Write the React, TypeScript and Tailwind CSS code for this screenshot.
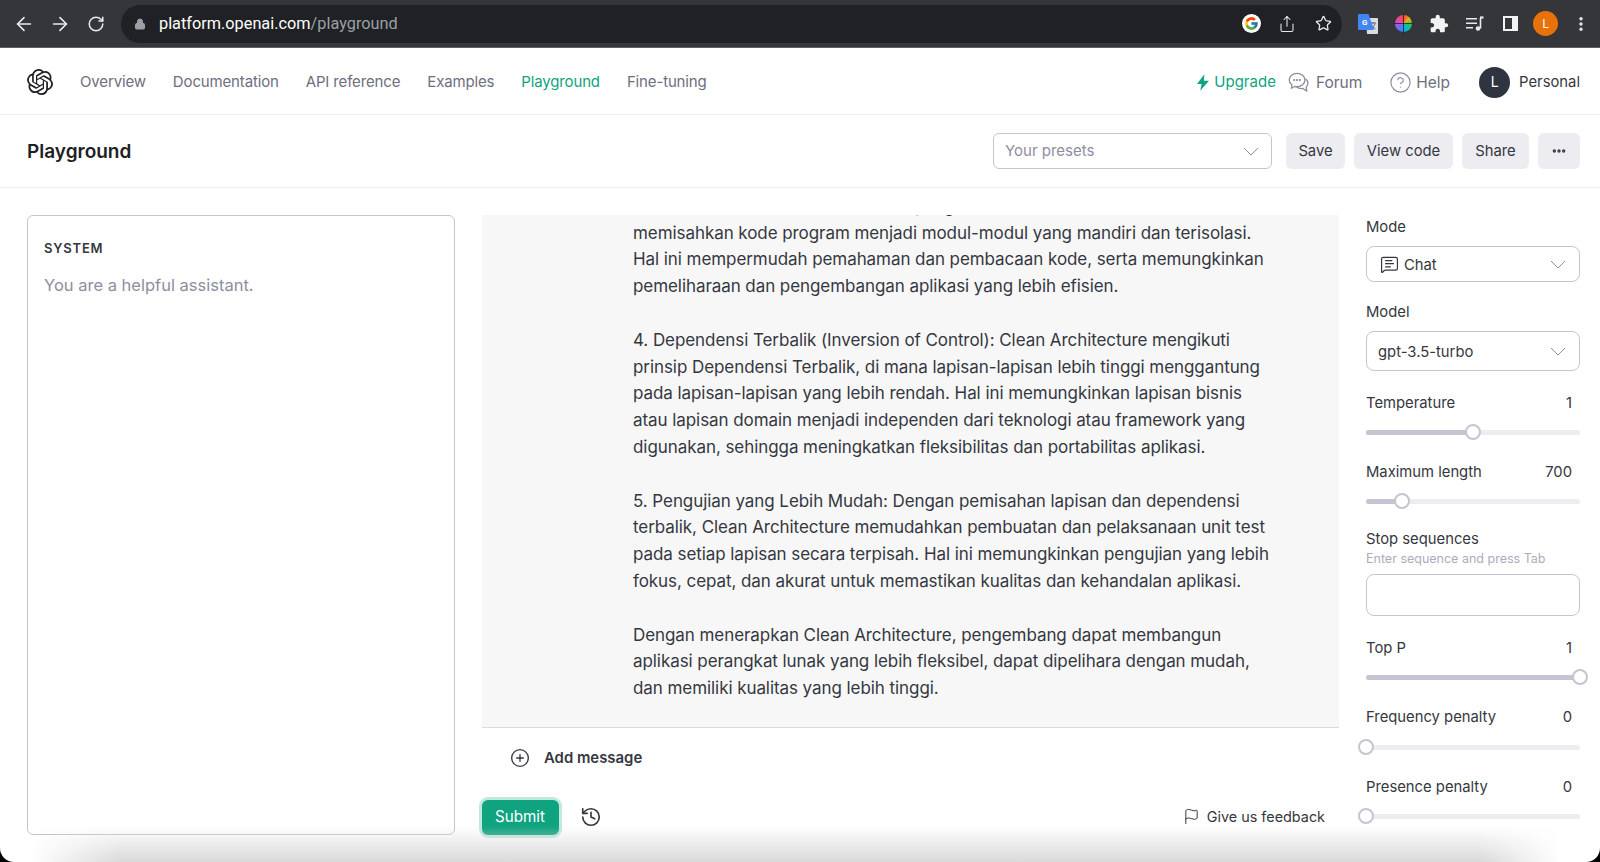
import { ArrowLeft, ArrowRight, CirclePlus, Ellipsis, Flag, History, Lock, MessageSquareText, RotateCw, Share, Star, CircleHelp, EllipsisVertical } from 'lucide-react'
import { FcGoogle } from 'react-icons/fc'
import { MdExtension } from 'react-icons/md'
import { SiOpenai } from 'react-icons/si'

const navLinks = ['Overview', 'Documentation', 'API reference', 'Examples', 'Playground', 'Fine-tuning']

const paragraphs = [
  [
    '3. Modularitas dan Keterbacaan: Ia yang',
    'memisahkan kode program menjadi modul-modul yang mandiri dan terisolasi.',
    'Hal ini mempermudah pemahaman dan pembacaan kode, serta memungkinkan',
    'pemeliharaan dan pengembangan aplikasi yang lebih efisien.',
  ],
  [
    '4. Dependensi Terbalik (Inversion of Control): Clean Architecture mengikuti',
    'prinsip Dependensi Terbalik, di mana lapisan-lapisan lebih tinggi menggantung',
    'pada lapisan-lapisan yang lebih rendah. Hal ini memungkinkan lapisan bisnis',
    'atau lapisan domain menjadi independen dari teknologi atau framework yang',
    'digunakan, sehingga meningkatkan fleksibilitas dan portabilitas aplikasi.',
  ],
  [
    '5. Pengujian yang Lebih Mudah: Dengan pemisahan lapisan dan dependensi',
    'terbalik, Clean Architecture memudahkan pembuatan dan pelaksanaan unit test',
    'pada setiap lapisan secara terpisah. Hal ini memungkinkan pengujian yang lebih',
    'fokus, cepat, dan akurat untuk memastikan kualitas dan kehandalan aplikasi.',
  ],
  [
    'Dengan menerapkan Clean Architecture, pengembang dapat membangun',
    'aplikasi perangkat lunak yang lebih fleksibel, dapat dipelihara dengan mudah,',
    'dan memiliki kualitas yang lebih tinggi.',
  ],
]

function Chevron() {
  return (
    <svg width="16" height="9" viewBox="0 0 16 9" fill="none" stroke="#8e8ea0" strokeWidth="1">
      <path d="M1 1l7 7 7-7" />
    </svg>
  )
}

function ForumIcon() {
  return (
    <svg width="23" height="23" viewBox="0 0 24 24" fill="none" stroke="#8e8ea0" strokeWidth="1.4" strokeLinejoin="round" strokeLinecap="round">
      <path d="M10.5 2.5c4.6 0 8.2 3.1 8.2 7s-3.600 7-8.200 7c-.9 0-1.700-.1-2.500-.3L4.500 18l.6-3.600C3.200 13.100 2.300 11.400 2.300 9.500c0-3.900 3.600-7 8.200-7z" />
      <path d="M19.800 8.500c1.300 1.100 2 2.500 2 4.200 0 1.500-.6 2.800-1.700 3.900l.5 4.400-4-2.700c-2.700.4-5-.2-6.600-1.800" />
      <circle cx="7.500" cy="9.500" r=".5" fill="#8e8ea0" />
      <circle cx="10.500" cy="9.500" r=".5" fill="#8e8ea0" />
      <circle cx="13.500" cy="9.500" r=".5" fill="#8e8ea0" />
    </svg>
  )
}

function TranslateIcon() {
  return (
    <svg width="20" height="20" viewBox="0 0 20 20">
      <path d="M8 4h11a1 1 0 0 1 1 1v14a1 1 0 0 1-1 1H9z" fill="#dadce0" />
      <path d="M12 9h6M15 8v1.500M17 9.500c-.6 2.500-2.400 4.500-4.500 5.500M13.500 11c.7 1.500 2.300 3 4 3.800" stroke="#5f6368" strokeWidth="1" fill="none" />
      <path d="M1 0h9.500L16 16H1a1 1 0 0 1-1-1V1a1 1 0 0 1 1-1z" fill="#4285f4" />
      <text x="4" y="11" fontSize="8" fontWeight="700" fill="#fff" fontFamily="Roboto, sans-serif">G</text>
    </svg>
  )
}

function QueueIcon() {
  return (
    <svg width="18" height="16" viewBox="0 0 18 16" fill="none" stroke="#e8eaed" strokeWidth="1.6">
      <path d="M0 2.800h11M0 7.300h11M0 11.800h7" />
      <path d="M14.500 2v10.500" />
      <path d="M14 1.500h3.500" strokeWidth="2.2" />
      <circle cx="12" cy="12.500" r="2.300" fill="#e8eaed" stroke="none" />
    </svg>
  )
}

function SidePanelIcon() {
  return (
    <div className="flex h-[15px] w-[15px] border-[2px] border-[#f1f3f4] bg-[#f1f3f4]">
      <div className="h-full w-[7px] bg-[#35363a]" />
    </div>
  )
}

function ColorWheel() {
  return (
    <div className="relative h-[17px] w-[17px] rounded-full bg-[conic-gradient(#ef4444,#eab308,#22c55e,#06b6d4,#3b82f6,#a855f7,#ec4899,#ef4444)]">
      <svg width="21" height="21" viewBox="0 0 21 21" stroke="#202124" strokeWidth="0.8" className="absolute -left-0.5 -top-0.5">
        <path d="M10.500 0v21M0 10.500h21" />
      </svg>
    </div>
  )
}

function BrowserBar() {
  return (
    <div className="flex h-[48px] shrink-0 items-center border-b border-[#5f6064] bg-[#35363a] pl-[6px] text-[#e8eaed]">
      <div className="flex h-9 w-9 items-center justify-center"><ArrowLeft size={22} strokeWidth={1.8} /></div>
      <div className="flex h-9 w-9 items-center justify-center"><ArrowRight size={22} strokeWidth={1.8} /></div>
      <div className="flex h-9 w-9 items-center justify-center"><RotateCw size={18} strokeWidth={2} /></div>
      <div className="ml-[7px] flex h-[38px] w-[1221px] items-center rounded-full bg-[#202124] pl-[13px] pr-px">
        <Lock size={12} fill="#9aa0a6" stroke="#9aa0a6" />
        <div className="ml-[13px] flex-1 pt-px font-['Roboto',sans-serif] text-[16.3px] leading-none">
          <span className="text-white">platform.openai.com</span>
          <span className="text-[#9aa0a6]">/playground</span>
        </div>
        <div className="flex h-9 w-9 items-center justify-center">
          <div className="flex h-[19px] w-[19px] items-center justify-center rounded-full bg-white"><FcGoogle size={15} /></div>
        </div>
        <div className="flex h-9 w-9 items-center justify-center"><Share size={18} strokeWidth={1.4} /></div>
        <div className="flex h-9 w-9 items-center justify-center"><Star size={17} strokeWidth={1.8} /></div>
      </div>
      <div className="ml-2 flex">
        <div className="flex h-9 w-[35.6px] items-center justify-center"><TranslateIcon /></div>
        <div className="flex h-9 w-[35.6px] items-center justify-center"><ColorWheel /></div>
        <div className="flex h-9 w-[35.6px] items-center justify-center"><MdExtension size={20} color="#f1f3f4" /></div>
        <div className="flex h-9 w-[35.6px] items-center justify-center"><QueueIcon /></div>
        <div className="flex h-9 w-[35.6px] items-center justify-center"><SidePanelIcon /></div>
        <div className="flex h-9 w-[35.6px] items-center justify-center">
          <div className="flex h-[25px] w-[25px] items-center justify-center rounded-full bg-[#e8710a] text-xs text-white">L</div>
        </div>
        <div className="flex h-9 w-[35.6px] items-center justify-center"><EllipsisVertical size={18} strokeWidth={2.6} /></div>
      </div>
    </div>
  )
}

function TopNav() {
  return (
    <nav className="flex h-[67px] shrink-0 items-center justify-between border-b border-[#ececf1] pl-[27px] pr-5 pt-[2px]">
      <div className="flex items-center">
        <SiOpenai size={26} color="#202123" />
        <div className="ml-[27px] flex gap-[27px] text-[15px] tracking-[-0.15px]">
          {navLinks.map((link) => (
            <a key={link} className={link === 'Playground' ? 'text-[#10a37f]' : 'text-[#6e6e80]'}>
              {link}
            </a>
          ))}
        </div>
      </div>
      <div className="flex items-center text-[15.5px]">
        <svg width="12" height="17" viewBox="0 0 13 18" fill="#10a37f"><path d="M8 0 0 10.500h5L3.500 18 13 7H7.500z" /></svg>
        <span className="ml-[5px] text-[15px] text-[#10a37f]">Upgrade</span>
        <span className="ml-[11px] flex items-center gap-[6px] pt-px text-[#6e6e80]"><ForumIcon />Forum</span>
        <span className="ml-[27px] flex items-center gap-[4px] pt-px text-[#6e6e80]"><CircleHelp size={23} strokeWidth={1.2} color="#8e8ea0" />Help</span>
        <div className="ml-[29px] flex h-[31px] w-[31px] items-center justify-center rounded-full bg-[#2f3441] text-sm text-white">L</div>
        <span className="ml-[9px] text-[14.8px] text-[#353740]">Personal</span>
      </div>
    </nav>
  )
}

function PageHeader() {
  return (
    <header className="flex h-[73px] shrink-0 items-center justify-between border-b border-[#ececf1] pl-[27px] pr-5">
      <h1 className="pt-[3px] text-[19px] font-semibold text-[#202123]">Playground</h1>
      <div className="flex items-center gap-[9px] text-[14.8px] text-[#353740]">
        <div className="mr-[5px] flex h-[36px] w-[279px] items-center justify-between rounded-md border border-[#c5c5d2] pl-[11px] pr-[12px] text-[15px] text-[#8e8ea0]">
          <span className="pt-px">Your presets</span>
          <Chevron />
        </div>
        <button className="h-[36px] w-[59px] rounded-md bg-[#ececf1]">Save</button>
        <button className="h-[36px] w-[99px] rounded-md bg-[#ececf1]">View code</button>
        <button className="h-[36px] w-[67px] rounded-md bg-[#ececf1]">Share</button>
        <button className="flex h-[36px] w-[42px] items-center justify-center rounded-md bg-[#ececf1]"><Ellipsis size={16} strokeWidth={3} /></button>
      </div>
    </header>
  )
}

function SliderRow({ label, value, percent, top, gap }: { label: string; value: string; percent: number; top: string; gap: string }) {
  return (
    <>
      <div className={`flex h-6 items-center justify-between pr-2 text-[14.8px] text-[#353740] ${top}`}>
        <span>{label}</span>
        <span>{value}</span>
      </div>
      <div className={`relative flex h-[14px] items-center ${gap}`}>
        <div className="h-[5px] w-full rounded-full bg-[#ececf1]">
          <div className="h-full rounded-full bg-[#c5c5d2]" style={{ width: `${percent}%` }} />
        </div>
        <div
          className="absolute top-1/2 h-[16px] w-[16px] -translate-x-1/2 -translate-y-1/2 rounded-full border-2 border-[#c5c5d2] bg-white"
          style={{ left: `${percent}%` }}
        />
      </div>
    </>
  )
}

function Settings() {
  return (
    <aside className="flex w-[214px] shrink-0 flex-col">
      <div className="flex h-6 items-center text-[14.8px] text-[#353740]">Mode</div>
      <div className="mt-[7px] flex h-[36px] items-center justify-between rounded-lg border border-[#c5c5d2] pl-[13px] pr-[13px] text-[14.8px] text-[#353740]">
        <span className="flex items-center gap-[5px]"><MessageSquareText size={19} strokeWidth={1.5} /><span className="pt-[2px]">Chat</span></span>
        <Chevron />
      </div>
      <div className="mt-[18px] flex h-6 items-center text-[14.8px] text-[#353740]">Model</div>
      <div className="mt-[7px] flex h-10 items-center justify-between rounded-lg border border-[#c5c5d2] pl-[11px] pr-[13px] text-[14.8px] text-[#353740]">
        <span className="pt-[2px]">gpt-3.5-turbo</span>
        <Chevron />
      </div>
      <SliderRow label="Temperature" value="1" percent={50} top="mt-5" gap="mt-2.5" />
      <SliderRow label="Maximum length" value="700" percent={17} top="mt-[21px]" gap="mt-2.5" />
      <div className="mt-[19px] flex h-6 items-center text-[14.8px] text-[#353740]">Stop sequences</div>
      <div className="h-4 text-[12.5px] leading-4 text-[#acacbe]">Enter sequence and press Tab</div>
      <div className="mt-[7px] h-[42px] rounded-lg border border-[#c5c5d2]" />
      <SliderRow label="Top P" value="1" percent={100} top="mt-5" gap="mt-2.5" />
      <SliderRow label="Frequency penalty" value="0" percent={0} top="mt-[21px]" gap="mt-[11px]" />
      <SliderRow label="Presence penalty" value="0" percent={0} top="mt-[21px]" gap="mt-2.5" />
    </aside>
  )
}

function ChatColumn() {
  return (
    <section className="flex min-w-0 flex-1 flex-col">
      <div className="flex h-[513px] flex-col justify-end overflow-hidden border-b border-[#d9d9e3] bg-[#f7f7f8] pb-[25px] pl-[151px] text-[17px] leading-[26.8px] tracking-[-0.07px] text-[#353740]">
        {paragraphs.map((lines, i) => (
          <p key={i} className={i > 0 ? 'mt-[26.8px]' : ''}>
            {lines.map((line) => (
              <span key={line} className="block whitespace-nowrap">{line}</span>
            ))}
          </p>
        ))}
      </div>
      <div className="mt-[18px] flex h-6 items-center pl-[28px] text-[14.9px] font-semibold text-[#353740]">
        <CirclePlus size={20} strokeWidth={1.6} />
        <span className="ml-[14px]">Add message</span>
      </div>
      <div className="mt-[30px] flex items-center pr-[14px]">
        <button className="h-[35px] w-[77px] rounded-md bg-[#10a37f] pr-px text-[15.2px] text-white ring-[3px] ring-[#10a37f]/25">Submit</button>
        <History size={22} strokeWidth={1.8} color="#353740" className="mb-[2px] ml-[21px]" />
        <span className="ml-auto flex items-center gap-[7px] pb-[2px] text-[14.4px] text-[#353740]">
          <Flag size={17} strokeWidth={1.4} />
          Give us feedback
        </span>
      </div>
    </section>
  )
}

export default function App() {
  return (
    <div className="h-[862px] w-[1600px] overflow-hidden bg-black font-['Inter',sans-serif]">
      <div className="relative flex h-full flex-col overflow-hidden rounded-b-[14px] bg-white">
        <BrowserBar />
        <TopNav />
        <PageHeader />
        <main className="flex flex-1 gap-[27px] pl-[27px] pr-5 pt-[27px]">
          <div className="h-[620px] w-[428px] shrink-0 rounded-md border border-[#c5c5d2] px-4 py-[22px]">
            <div className="flex h-[22px] items-center text-[13px] font-semibold tracking-[0.06em] text-[#353740]">SYSTEM</div>
            <div className="mt-[13px] text-[16.5px] text-[#8e8ea0]">You are a helpful assistant.</div>
          </div>
          <ChatColumn />
          <Settings />
        </main>
        {/* window shadow along the bottom edge of the screenshot */}
        <div className="pointer-events-none absolute inset-x-0 bottom-0 h-[36px] bg-gradient-to-b from-transparent to-[#d9d9d9] [mask-image:linear-gradient(to_right,transparent_30px,black_120px,black_1480px,transparent_1560px)]" />
      </div>
    </div>
  )
}
